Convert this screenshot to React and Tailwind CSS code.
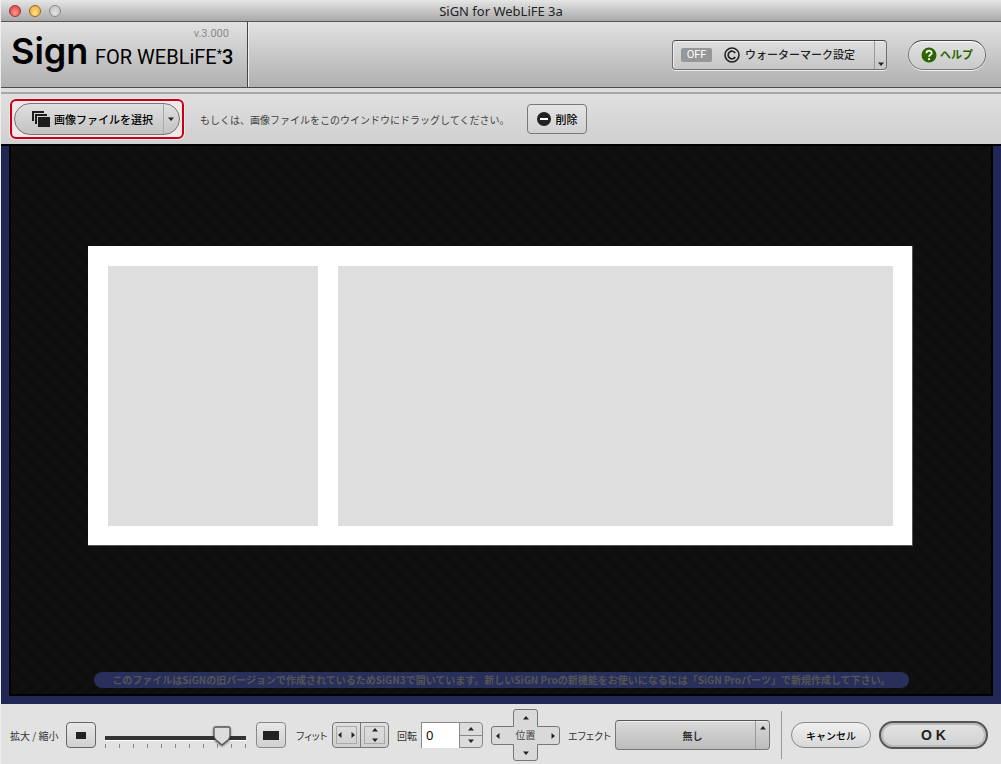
import { useState } from 'react';

const Arrow = ({ dir = 'down', className = '' }) => {
  const points = {
    down: '0,1.500 6,1.500 3,5',
    up: '0,4.500 6,4.500 3,1',
    left: '4.500,0 4.500,6 1,3',
    right: '1.500,0 1.500,6 5,3',
  };
  return (
    <svg viewBox="0 0 6 6" className={`size-1.5 shrink-0 ${className}`} aria-hidden="true">
      <polygon points={points[dir]} fill="#222" />
    </svg>
  );
};

const TitleBar = () => (
  <div className="grid grid-cols-[1fr_auto_1fr] items-center h-[22px] px-2 bg-linear-to-b from-[#e6e6e6] to-[#a9a9a9] border-b border-[#555]">
    <div className="flex gap-2">
      <button aria-label="閉じる" className="size-3 rounded-full border border-[#8d3a37] bg-radial-[at_50%_70%] from-[#ff9a90] to-[#d9332f]" />
      <button aria-label="しまう" className="size-3 rounded-full border border-[#97652a] bg-radial-[at_50%_70%] from-[#ffe68a] to-[#f0982c]" />
      <button aria-label="拡大" className="size-3 rounded-full border border-[#8a8a8a] bg-radial-[at_50%_70%] from-[#e4e4e4] to-[#bcbcbc]" />
    </div>
    <h1 className="font-['Noto_Sans',sans-serif] text-[13px] leading-5 text-[#222]">SiGN for WebLiFE 3a</h1>
  </div>
);

const Header = () => (
  <header className="flex items-center h-[66px] bg-linear-to-b from-[#e2e2e2] to-[#b0b0b0] border-b border-[#4c4c4c]">
    <div className="flex flex-col w-[247px] h-full pl-2.5 border-r border-[#444] shadow-[1px_0_0_#eee] font-[Roboto,sans-serif] text-black">
      <span className="self-end mr-[18px] mt-1.5 h-[11px] text-[11px] leading-3 text-[#8a8a8a]">v.3.000</span>
      <div className="flex items-baseline h-9 leading-6">
        <span className="w-[78px] font-[Inter,sans-serif] text-4xl leading-6 font-semibold">Sign</span>
        <span className="ml-1.5 text-xl leading-6">FOR WEBLiFE</span>
        <sup className="text-xs leading-3">*</sup>
        <span className="text-xl leading-6 font-medium">3</span>
      </div>
    </div>
    <div className="flex ml-auto mr-[21px] h-[30px] rounded-sm border border-[#6e6e6e] border-t-[#444] bg-linear-to-b from-[#dedede] to-[#c6c6c6] shadow-[0_1px_0_#eee,inset_0_1px_0_#f4f4f4,inset_1px_0_0_#eee]">
      <button className="flex items-center w-[201px] pl-2">
        <span className="w-[31px] rounded-xs bg-[#979797] font-[Roboto,sans-serif] text-[11px] leading-[14px] text-center text-white">OFF</span>
        <svg viewBox="0 0 16 16" className="size-4 ml-3 mr-[5px]" fill="none" stroke="#222" aria-hidden="true">
          <circle cx="8" cy="8" r="7" strokeWidth="1.6" />
          <path d="M11.2 6 A3.8 3.8 0 1 0 11.2 10" strokeWidth="1.7" />
        </svg>
        <span className="text-[11px] font-medium text-[#222]">ウォーターマーク設定</span>
      </button>
      <button aria-label="ウォーターマーク設定メニュー" className="flex items-end justify-center w-3 pb-0.5 border-l border-[#999]">
        <Arrow />
      </button>
    </div>
    <button className="flex items-center justify-center gap-[3px] w-[78px] h-[30px] mr-[15px] rounded-full border border-[#777] border-t-[#444] bg-linear-to-b from-[#e2e2e2] to-[#cacaca] shadow-[0_1px_0_#f2f2f2,inset_0_1px_1px_#fff] text-[11px] font-bold text-[#2c6400]">
      <svg viewBox="0 0 16 16" className="size-4" aria-hidden="true">
        <circle cx="8" cy="8" r="7.5" fill="#2c6400" />
        <path d="M5.4 6.2 C5.4 2.9 10.7 2.9 10.7 6 C10.7 7.8 8.1 7.7 8.1 9.8" fill="none" stroke="#fff" strokeWidth="1.8" />
        <circle cx="8.1" cy="12.2" r="1.1" fill="#fff" />
      </svg>
      ヘルプ
    </button>
  </header>
);

const Toolbar = () => (
  <div className="border-t-4 border-[#dedede]">
    <div className="flex items-center h-[52px] px-[9px] border-t-2 border-[#a6a6a6] bg-linear-to-b from-[#dfdfdf] to-[#d0d0d0]">
      <div className="flex p-0.5 rounded-md border-2 border-[#c4001a] bg-[#f2e6e6] shadow-[0_0_0_1px_#f2e6e6]">
        <div className="flex w-[166px] h-8 rounded-full border border-[#777] bg-linear-to-b from-[#e0e0e0] to-[#c2c2c2]">
          <button className="flex flex-1 items-center pl-[17px] gap-1 text-[11px] font-medium text-black">
            <svg viewBox="0 0 18 16" className="w-[18px] h-4" aria-hidden="true">
              <path d="M0 0H12V2H2V10H0Z M3 3H15V5H5V13H3Z M6 6H18V16H6Z" fill="#1c1c1c" />
            </svg>
            画像ファイルを選択
          </button>
          <button aria-label="ファイルメニュー" className="flex items-center justify-center w-4 pr-0.5 border-l border-[#aaa]">
            <Arrow />
          </button>
        </div>
      </div>
      <p className="ml-4 text-[10px] text-[#444]">もしくは、画像ファイルをこのウインドウにドラッグしてください。</p>
      <button className="flex items-center justify-center gap-1 w-[60px] h-[30px] ml-[18px] rounded-sm border border-[#777] bg-linear-to-b from-[#e4e4e4] to-[#d0d0d0] text-[11px] font-medium text-black">
        <svg viewBox="0 0 14 14" className="size-3.5" aria-hidden="true">
          <circle cx="7" cy="7" r="7" fill="#222" />
          <rect x="3" y="6" width="8" height="2" fill="#fff" />
        </svg>
        削除
      </button>
    </div>
  </div>
);

const Canvas = () => (
  <main className="flex flex-1 flex-col bg-[#1f2854] px-2 pb-2 border-t-2 border-black">
    <div className="flex flex-1 flex-col border-2 border-t-0 border-black bg-[repeating-conic-gradient(#0e0e0e_0_25%,#101010_0_50%)] bg-size-[16px_16px] pt-[100px] pb-1.5">
      <div className="grid grid-cols-[210fr_555fr] gap-5 h-[300px] ml-[77px] mr-[78px] p-5 pr-[19px] pb-[19px] bg-white border-r border-b border-[#555]">
        <div className="bg-[#dedede]" />
        <div className="bg-[#dedede]" />
      </div>
      <p className="mt-auto ml-[83px] mr-[82px] rounded-full bg-[#272f5a] text-center text-[10px] leading-4 font-bold text-[#555] whitespace-nowrap">
        このファイルはSiGNの旧バージョンで作成されているためSiGN3で開いています。新しいSiGN Proの新機能をお使いになるには「SiGN Proパーツ」で新規作成して下さい。
      </p>
    </div>
  </main>
);

const ZoomSlider = ({ value, onChange }) => (
  <div className="relative w-[141px] h-[26px] ml-[9px] mr-2.5">
    <div className="mt-[14px] h-1 bg-[#333] shadow-[0_1px_0_#fff]" />
    <div className="flex justify-between mt-1">
      {Array.from({ length: 11 }, (_, i) => (
        <span key={i} className="w-px h-1 bg-[#888]" />
      ))}
    </div>
    <svg
      viewBox="0 0 20 22"
      className="absolute top-1 w-5 h-[22px] -translate-x-1/2 drop-shadow-[0_1px_1px_rgba(0,0,0,0.5)]"
      style={{ left: `${value}%` }}
      aria-hidden="true"
    >
      <path d="M3.5 1H16.5Q18 1 18 2.5V10Q18 12 16 14L10 19L4 14Q2 12 2 10V2.5Q2 1 3.5 1Z" fill="#ddd" stroke="#555" strokeWidth="1.3" />
    </svg>
    <input
      id="zoom"
      type="range"
      min="0"
      max="100"
      value={value}
      onChange={(e) => onChange(Number(e.target.value))}
      className="absolute inset-0 w-full h-full opacity-0"
    />
  </div>
);

const PositionPad = () => (
  <div className="relative ml-2 w-[69px] h-[52px]" role="group" aria-label="位置">
    <svg viewBox="0 0 69 52" className="absolute inset-0 w-full h-full" aria-hidden="true">
      <path
        d="M25 .5H44Q46.500 .5 46.500 3V17.500H66Q68.500 17.500 68.500 20V33Q68.500 35.500 66 35.500H46.500V49Q46.500 51.500 44 51.500H25Q22.500 51.500 22.500 49V35.500H3Q.5 35.500 .5 33V20Q.5 17.500 3 17.500H22.500V3Q22.500 .5 25 .5Z"
        fill="#d9d9d9"
        stroke="#777"
      />
    </svg>
    <div className="relative grid grid-cols-[22px_25px_22px] grid-rows-[17px_19px_16px] h-full place-items-stretch">
      <button aria-label="上へ" className="col-start-2 grid place-items-center"><Arrow dir="up" /></button>
      <button aria-label="左へ" className="row-start-2 grid place-items-center pr-2"><Arrow dir="left" /></button>
      <span className="row-start-2 col-start-2 text-[10px] leading-[18px] text-center text-[#444]">位置</span>
      <button aria-label="右へ" className="row-start-2 col-start-3 grid place-items-center pl-2"><Arrow dir="right" /></button>
      <button aria-label="下へ" className="row-start-3 col-start-2 grid place-items-center"><Arrow /></button>
    </div>
  </div>
);

const Footer = () => {
  const [zoom, setZoom] = useState(83);
  const [angle, setAngle] = useState(0);

  return (
    <footer className="flex items-center h-[60px] pl-[9px] pr-[13px] pt-0.5 bg-[#e2e2e2] text-[10px] text-[#333] whitespace-nowrap">
      <label htmlFor="zoom" className="w-[56px] [font-feature-settings:'palt']">拡大 / 縮小</label>
      <button aria-label="縮小" onClick={() => setZoom(Math.max(0, zoom - 10))} className="grid place-items-center w-[30px] h-[26px] rounded-sm border border-[#666] bg-linear-to-b from-[#e8e8e8] to-[#d0d0d0]">
        <span className="w-2.5 h-[7px] bg-[#222]" />
      </button>
      <ZoomSlider value={zoom} onChange={setZoom} />
      <button aria-label="拡大" onClick={() => setZoom(Math.min(100, zoom + 10))} className="grid place-items-center w-[30px] h-[26px] rounded-sm border border-[#888] bg-linear-to-b from-[#e8e8e8] to-[#d0d0d0]">
        <span className="w-4 h-[9px] bg-[#222]" />
      </button>

      <span className="ml-2.5 w-9 [font-feature-settings:'palt']">フィット</span>
      <div className="flex w-[57px] h-[26px] rounded-sm border border-[#777] bg-linear-to-b from-[#e0e0e0] to-[#cfcfcf]">
        <button aria-label="幅に合わせる" className="flex flex-1 items-center p-[3px]">
          <span className="flex flex-1 h-full items-center justify-between border border-[#aaa]"><Arrow dir="left" /><Arrow dir="right" /></span>
        </button>
        <button aria-label="高さに合わせる" className="flex flex-1 items-center p-[3px] border-l border-[#777]">
          <span className="flex flex-1 flex-col h-full items-center justify-between border border-[#aaa]"><Arrow dir="up" /><Arrow /></span>
        </button>
      </div>

      <label htmlFor="angle" className="ml-2 w-6">回転</label>
      <input
        id="angle"
        type="text"
        value={angle}
        onChange={(e) => setAngle(e.target.value)}
        className="w-[38px] h-[26px] pl-1 pb-0.5 border-t border-l border-[#888] bg-white font-['Open_Sans',sans-serif] text-[13px] text-black"
      />
      <div className="flex flex-col w-6 h-[26px] rounded-r-sm border border-[#888] bg-[#dcdcdc]">
        <button aria-label="角度を増やす" onClick={() => setAngle(Number(angle) + 1)} className="grid flex-1 place-items-center border-b border-[#888]"><Arrow dir="up" /></button>
        <button aria-label="角度を減らす" onClick={() => setAngle(Number(angle) - 1)} className="grid flex-1 place-items-center"><Arrow /></button>
      </div>

      <PositionPad />

      <label htmlFor="effect" className="ml-2 w-[47px] [font-feature-settings:'palt']">エフェクト</label>
      <div className="relative flex-1 h-[30px]">
        <select id="effect" className="appearance-none w-full h-full pr-0 rounded-sm border border-[#777] border-t-[#555] bg-linear-to-b from-[#dadada] to-[#bcbcbc] shadow-[inset_0_1px_0_#eee] text-center text-[10px] font-bold text-[#333]">
          <option>無し</option>
        </select>
        <span className="absolute inset-y-px right-px flex w-[14px] justify-center pt-1 border-l border-[#999] pointer-events-none">
          <Arrow dir="up" />
        </span>
      </div>

      <div className="ml-[11px] mr-[9px] w-px h-12 bg-[#999]" />
      <button className="w-20 h-[26px] rounded-full border border-[#888] bg-linear-to-b from-[#f0f0f0] to-[#d8d8d8] text-[10px] font-medium text-black">キャンセル</button>
      <button className="w-[109px] h-7 ml-2 rounded-full border-2 border-[#555] bg-linear-to-b from-[#e4e4e4] to-[#d0d0d0] shadow-[inset_0_0_0_2px_#bbb] font-['Liberation_Sans',sans-serif] text-sm font-bold text-[#222]">O K</button>
    </footer>
  );
};

const App = () => {
  return (
    <div className="flex flex-col min-h-screen border-l border-[#eee] bg-[#e2e2e2] font-['Noto_Sans_CJK_JP',sans-serif]">
      <TitleBar />
      <Header />
      <Toolbar />
      <Canvas />
      <Footer />
    </div>
  );
};

export default App;
